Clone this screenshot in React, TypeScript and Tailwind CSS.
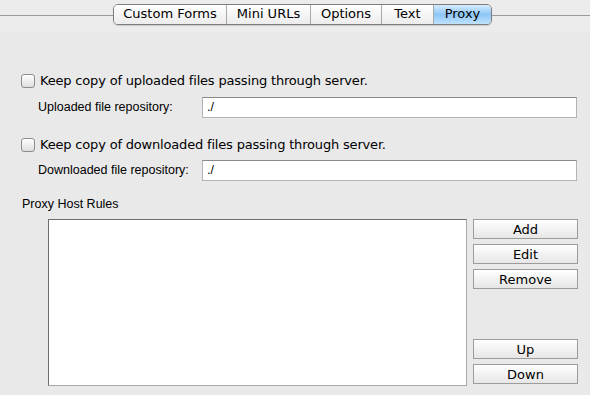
import React from "react";

const tabs = ["Custom Forms", "Mini URLs", "Options", "Text", "Proxy"];
const tabWidths = ["w-[113px]", "w-[84px]", "w-[71px]", "w-[52px]", "w-[57px]"];

function Checkbox() {
  return (
    <span className="inline-block w-[14px] h-[14px] rounded-[3px] border border-[#8c8c8c] bg-gradient-to-b from-white to-[#dedede] shadow-[inset_0_1px_0_#fff]" />
  );
}

function Field({ label, value }: { label: string; value: string }) {
  return (
    <div className="flex items-center h-[21px] pl-[38px]">
      <span className="w-[164px] text-[12.5px]" style={{ fontFamily: '"Liberation Sans", Arial, sans-serif' }}>
        {label}
      </span>
      <div className="w-[375px] h-[21px] bg-white border border-[#b4b4b4] border-t-[#8a8a8a] flex items-center pl-[4px] text-[12.5px]"
        style={{ fontFamily: '"Liberation Sans", Arial, sans-serif' }}>
        {value}
      </div>
    </div>
  );
}

function Btn({ children }: { children: React.ReactNode }) {
  return (
    <button className="w-[105px] h-[20px] border border-[#9c9c9c] bg-gradient-to-b from-white to-[#e6e6e6] text-[13px] leading-none text-black flex items-center justify-center">
      {children}
    </button>
  );
}

export default function App() {
  return (
    <div className="w-[590px] h-[395px] bg-[#ececec] text-black overflow-hidden"
      style={{ fontFamily: '"DejaVu Sans", "Lucida Grande", sans-serif' }}>
      <div className="h-[32px] pt-[4px]">
        <div className="flex items-center h-[20px]">
          <div className="w-[113px] h-px bg-[#9a9a9a] mt-[2px]" />
          <div className="flex h-[21px] rounded-[5px] border border-[#7d7d7d] overflow-hidden shadow-[0_1px_1px_rgba(0,0,0,0.15)]">
            {tabs.map((t, i) => (
              <div key={t}
                className={
                  "flex items-center justify-center text-[13px] " + tabWidths[i] +
                  (i < tabs.length - 1 ? " border-r border-[#a8a8a8]" : "") +
                  (t === "Proxy"
                    ? " bg-gradient-to-b from-[#d6ecfd] via-[#8cc6f7] to-[#c0e2fc]"
                    : " bg-gradient-to-b from-white to-[#ececec]")
                }>
                {t}
              </div>
            ))}
          </div>
          <div className="flex-1 h-px bg-[#9a9a9a] mt-[2px]" />
        </div>
      </div>
      <div className="bg-[#e9e9e9] h-[363px]">
        <div className="pt-[42px] pl-[21px] flex items-center gap-[5px] h-[56px]">
          <Checkbox />
          <span className="text-[13px] tracking-[-0.18px]">Keep copy of uploaded files passing through server.</span>
        </div>
        <div className="mt-[9px]">
          <Field label="Uploaded file repository:" value="./" />
        </div>
        <div className="mt-[20px] pl-[21px] flex items-center gap-[5px] h-[14px]">
          <Checkbox />
          <span className="text-[13px] tracking-[-0.18px]">Keep copy of downloaded files passing through server.</span>
        </div>
        <div className="mt-[8px]">
          <Field label="Downloaded file repository:" value="./" />
        </div>
        <div className="mt-[16px] pl-[22px] text-[12.5px] h-[14px] flex items-center"
          style={{ fontFamily: '"Liberation Sans", Arial, sans-serif' }}>
          Proxy Host Rules
        </div>
        <div className="mt-[8px] flex pl-[48px]">
          <div className="w-[419px] h-[167px] bg-white border border-[#a9a9a9] border-t-[#6e6e6e] border-l-[#6e6e6e]" />
          <div className="ml-[6px] h-[165px] flex flex-col">
            <div className="flex flex-col gap-[5px]">
              <Btn>Add</Btn>
              <Btn>Edit</Btn>
              <Btn>Remove</Btn>
            </div>
            <div className="mt-auto flex flex-col gap-[5px]">
              <Btn>Up</Btn>
              <Btn>Down</Btn>
            </div>
          </div>
        </div>
      </div>
    </div>
  );
}
